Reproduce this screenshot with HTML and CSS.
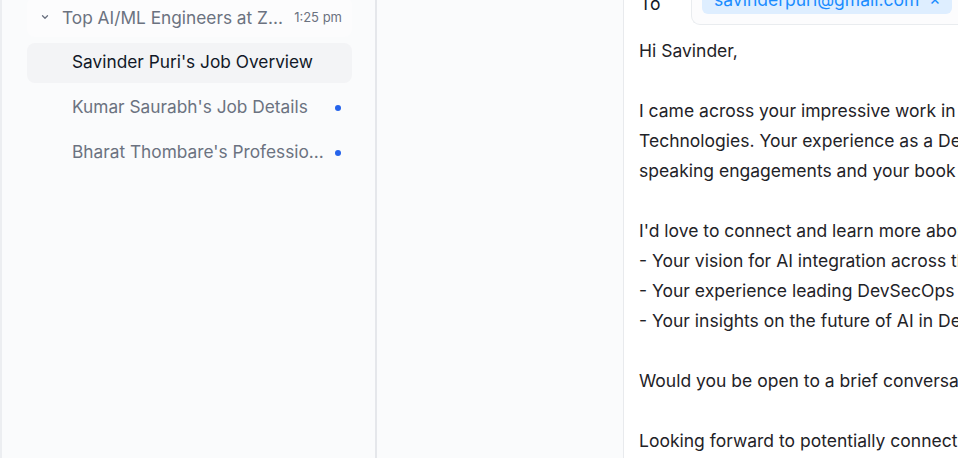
FILE: index.html
```html
<!DOCTYPE html>
<html>
<head>
<meta charset="utf-8">
<link rel="stylesheet" href="styles.css">
</head>
<body>
<div class="app">
  <aside class="sidebar">
    <div class="group-head">
      <svg class="chev" width="10" height="10" viewBox="0 0 10 10"><path d="M2.5 3.8 L5 6.3 L7.5 3.8" fill="none" stroke="#6b7280" stroke-width="1.3" stroke-linecap="round" stroke-linejoin="round"/></svg>
      <span class="group-title">Top AI/ML Engineers at Z...</span>
      <span class="time">1:25 pm</span>
    </div>
    <ul class="items">
      <li class="item active"><span class="label">Savinder Puri's Job Overview</span></li>
      <li class="item"><span class="label">Kumar Saurabh's Job Details</span><span class="dot"></span></li>
      <li class="item"><span class="label">Bharat Thombare's Professio...</span><span class="dot"></span></li>
    </ul>
  </aside>
  <section class="middle"></section>
  <main class="compose">
    <div class="to-row">
      <span class="to-label">To</span>
      <div class="recipients">
        <span class="chip">savinderpuri@gmail.com <span class="x">×</span></span>
      </div>
    </div>
    <div class="body-text">
      <div class="line">Hi Savinder,</div>
      <div class="line blank"></div>
      <div class="line">I came across your impressive work in AI and DevSecOps at Zensar</div>
      <div class="line">Technologies. Your experience as a DevSecOps leader, along with your</div>
      <div class="line">speaking engagements and your book on AI, really stood out to me.</div>
      <div class="line blank"></div>
      <div class="line">I'd love to connect and learn more about:</div>
      <div class="line">- Your vision for AI integration across the software lifecycle</div>
      <div class="line">- Your experience leading DevSecOps at enterprise scale</div>
      <div class="line">- Your insights on the future of AI in DevOps</div>
      <div class="line blank"></div>
      <div class="line">Would you be open to a brief conversation sometime next week?</div>
      <div class="line blank"></div>
      <div class="line">Looking forward to potentially connecting.</div>
    </div>
  </main>
</div>
</body>
</html>
```

FILE: styles.css
```css
* { box-sizing: border-box; }
html, body { margin: 0; padding: 0; }
body {
  font-family: Inter, "Noto Sans", sans-serif;
  background: #ffffff;
  overflow: hidden;
  height: 458px;
}
.app {
  display: flex;
  height: 458px;
  overflow: hidden;
}
.sidebar {
  width: 377px;
  flex: none;
  background: #fafbfc;
  border-left: 2px solid #eceef1;
  border-right: 2px solid #e5e7eb;
  padding: 0 23px 0 25px;
}
.group-head {
  display: flex;
  align-items: center;
  height: 40px;
  margin-top: -3px;
  padding: 0 10px 0 13px;
  background: #fcfcfd;
  border-radius: 8px;
}
.chev { flex: none; margin-right: 12px; }
.group-title {
  flex: 1;
  font-size: 17.3px;
  color: #6b7280;
  white-space: nowrap;
  overflow: hidden;
}
.time {
  font-size: 13px;
  color: #6b7280;
  white-space: nowrap;
}
.items {
  list-style: none;
  margin: 6px 0 0;
  padding: 0;
  display: flex;
  flex-direction: column;
  gap: 5px;
}
.item {
  display: flex;
  align-items: center;
  height: 40px;
  padding: 0 11px 4px 45px;
  border-radius: 8px;
  font-size: 17.3px;
  color: #6b7280;
}
.item .label { flex: 1; white-space: nowrap; overflow: hidden; }
.item.active { background: #f3f4f6; color: #111827; }
.dot {
  width: 6px;
  height: 6px;
  border-radius: 50%;
  background: #2563eb;
  flex: none;
  margin-top: 3px;
}
.middle {
  width: 247px;
  flex: none;
  background: #fafbfc;
  border-right: 1px solid #e8eaed;
}
.compose {
  flex: 1;
  min-width: 0;
  background: #ffffff;
  padding-left: 15px;
  overflow: hidden;
}
.to-row {
  display: flex;
  align-items: stretch;
  height: 44px;
  margin-top: -19px;
}
.to-label {
  width: 52px;
  flex: none;
  font-size: 17.5px;
  color: #111827;
  display: flex;
  align-items: center;
  padding-left: 1px;
}
.recipients {
  flex: 1;
  border-left: 1px solid #e9ecef;
  border-bottom: 1px solid #e9ecef;
  border-bottom-left-radius: 9px;
  background: #fcfcfd;
  padding: 3px 0 0 10px;
  display: flex;
  align-items: flex-start;
}
.chip {
  display: inline-flex;
  align-items: center;
  height: 30px;
  padding: 0 11px 0 12px;
  background: #deeeff;
  color: #1a8cff;
  border-radius: 6px;
  font-size: 17.5px;
  white-space: nowrap;
}
.chip .x { margin-left: 10px; font-size: 17px; }
.body-text {
  margin-top: 11px;
  font-size: 17.5px;
  line-height: 30px;
  color: #1f2328;
}
.line { white-space: pre; height: 30px; }
```
